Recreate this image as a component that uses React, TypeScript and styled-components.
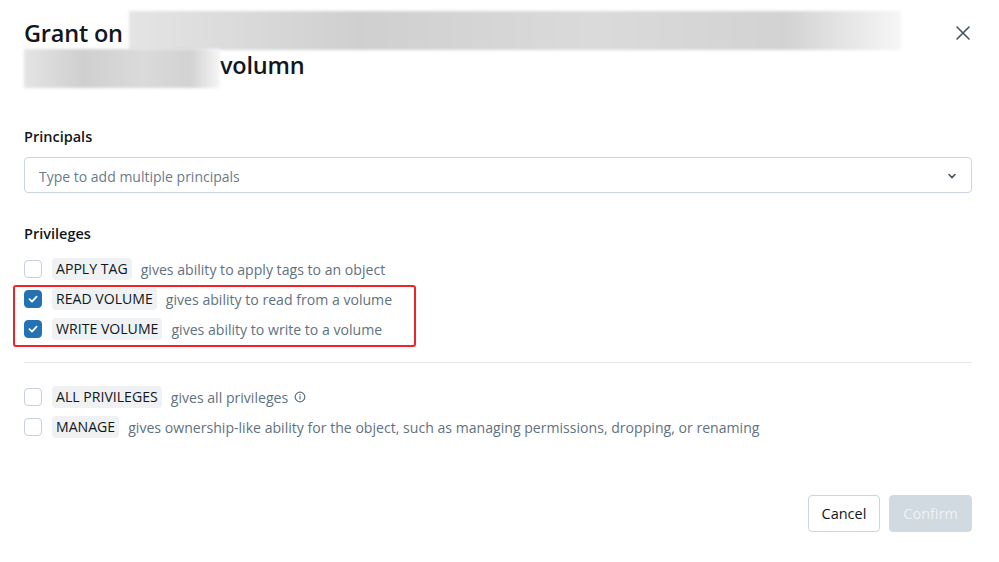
import styled, { createGlobalStyle } from 'styled-components';

const GlobalStyle = createGlobalStyle`
  html, body {
    margin: 0;
    padding: 0;
    background: #ffffff;
  }
  body {
    font-family: 'Open Sans', 'Noto Sans', sans-serif;
    color: #11171c;
  }
`;

const Modal = styled.div`
  width: 999px;
  height: 562px;
  box-sizing: border-box;
  padding: 17px 27px 0 24px;
  display: flex;
  flex-direction: column;
  background: #ffffff;
`;

const Header = styled.div`
  display: flex;
  justify-content: space-between;
  align-items: flex-start;
`;

const Title = styled.h2`
  margin: 0;
  font-size: 23.5px;
  font-weight: 600;
  line-height: 32px;
  letter-spacing: -0.2px;
  color: #11171c;
`;

const Redacted = styled.span<{ $w: number; $shift: number }>`
  display: inline-block;
  vertical-align: middle;
  position: relative;
  top: ${p => p.$shift}px;
  width: ${p => p.$w}px;
  height: 39px;
  margin: -6px 0;
  background: linear-gradient(90deg, #e4e4e4, #cfcfcf 30%, #dadada 60%, #d2d2d2 85%, #f6f6f6);
  filter: blur(1.5px);
`;

const CloseButton = styled.button`
  border: none;
  background: none;
  padding: 0;
  margin-top: 7px;
  width: 18px;
  height: 18px;
  color: #445461;
  cursor: pointer;
`;

const Section = styled.div<{ $top: number }>`
  margin-top: ${p => p.$top}px;
`;

const Label = styled.div<{ $gap: number }>`
  font-size: 14.5px;
  font-weight: 600;
  line-height: 22px;
  margin-bottom: ${p => p.$gap}px;
`;

const SelectBox = styled.div`
  height: 36px;
  box-sizing: border-box;
  border: 1px solid #cbd5df;
  border-radius: 4px;
  display: flex;
  align-items: center;
  justify-content: space-between;
  padding: 2px 14px 0 14px;
  font-size: 14px;
  color: #6b7b8a;
`;

const Rows = styled.div`
  display: flex;
  flex-direction: column;
  gap: 8px;
`;

const Highlight = styled.div`
  position: relative;
  display: flex;
  flex-direction: column;
  gap: 8px;
  &::after {
    content: '';
    position: absolute;
    left: -11px;
    top: -3px;
    width: 399px;
    bottom: -7px;
    border: 2px solid #f2222a;
    border-radius: 3px;
    pointer-events: none;
  }
`;

const Row = styled.label`
  display: flex;
  align-items: center;
  height: 22px;
  font-size: 14.1px;
  white-space: nowrap;
`;

const Box = styled.span<{ $checked?: boolean }>`
  width: 18px;
  height: 18px;
  box-sizing: border-box;
  border-radius: 4px;
  border: 1px solid ${p => (p.$checked ? '#2272b4' : '#c6d1db')};
  background: ${p => (p.$checked ? '#2272b4' : '#ffffff')};
  display: flex;
  align-items: center;
  justify-content: center;
  margin-right: 10px;
  flex-shrink: 0;
`;

const Tag = styled.span`
  background: #eff1f3;
  border-radius: 4px;
  padding: 0 4px;
  line-height: 22px;
  color: #11171c;
  margin-right: 9px;
`;

const Desc = styled.span`
  color: #5f7281;
  display: flex;
  align-items: center;
  gap: 6px;
`;

const Divider = styled.hr`
  border: none;
  border-top: 1px solid #e4e8ec;
  margin: 22px 0 23px;
`;

const Footer = styled.div`
  margin-top: auto;
  margin-bottom: 30px;
  display: flex;
  justify-content: flex-end;
  gap: 9px;
`;

const Button = styled.button<{ $primary?: boolean }>`
  height: 37px;
  box-sizing: border-box;
  padding: 0 13px;
  border-radius: 4px;
  font-family: inherit;
  font-size: 14.5px;
  border: 1px solid ${p => (p.$primary ? '#d1d9e1' : '#cbd5df')};
  background: ${p => (p.$primary ? '#d1d9e1' : '#ffffff')};
  color: ${p => (p.$primary ? '#eef2f5' : '#11171c')};
`;

const Check = () => (
  <svg width='12' height='12' viewBox='0 0 12 12'>
    <path d='M2.5 6.2 L5 8.6 L9.6 3.6' fill='none' stroke='#fff' strokeWidth='1.8' strokeLinecap='round' strokeLinejoin='round' />
  </svg>
);

type Priv = { name: string; desc: string; checked?: boolean; info?: boolean };

const PrivRow = ({ p }: { p: Priv }) => (
  <Row>
    <Box $checked={p.checked}>{p.checked && <Check />}</Box>
    <Tag>{p.name}</Tag>
    <Desc>
      {p.desc}
      {p.info && (
        <svg width='12' height='12' viewBox='0 0 12 12'>
          <circle cx='6' cy='6' r='4.8' fill='none' stroke='#5f7281' strokeWidth='1.2' />
          <rect x='5.4' y='5.2' width='1.2' height='3.2' fill='#5f7281' />
          <rect x='5.4' y='3.3' width='1.2' height='1.2' fill='#5f7281' />
        </svg>
      )}
    </Desc>
  </Row>
);

export default function App() {
  return (
    <>
      <GlobalStyle />
      <Modal>
        <Header>
          <Title>
            Grant on <Redacted $w={772} $shift={-5} />
            <br />
            <Redacted $w={196} $shift={1} />
            volumn
          </Title>
          <CloseButton aria-label='Close'>
            <svg width='18' height='18' viewBox='0 0 18 18'>
              <path d='M3 3 L15 15 M15 3 L3 15' stroke='currentColor' strokeWidth='1.6' strokeLinecap='round' />
            </svg>
          </CloseButton>
        </Header>

        <Section $top={45}>
          <Label $gap={9}>Principals</Label>
          <SelectBox>
            <span>Type to add multiple principals</span>
            <svg width='10' height='10' viewBox='0 0 10 10'>
              <path d='M2 3.5 L5 6.5 L8 3.5' fill='none' stroke='#445461' strokeWidth='1.6' strokeLinecap='round' />
            </svg>
          </SelectBox>
        </Section>

        <Section $top={30}>
          <Label $gap={13}>Privileges</Label>
          <Rows>
            <PrivRow p={{ name: 'APPLY TAG', desc: 'gives ability to apply tags to an object' }} />
            <Highlight>
              <PrivRow p={{ name: 'READ VOLUME', desc: 'gives ability to read from a volume', checked: true }} />
              <PrivRow p={{ name: 'WRITE VOLUME', desc: 'gives ability to write to a volume', checked: true }} />
            </Highlight>
          </Rows>
          <Divider />
          <Rows>
            <PrivRow p={{ name: 'ALL PRIVILEGES', desc: 'gives all privileges', info: true }} />
            <PrivRow
              p={{
                name: 'MANAGE',
                desc: 'gives ownership-like ability for the object, such as managing permissions, dropping, or renaming',
              }}
            />
          </Rows>
        </Section>

        <Footer>
          <Button>Cancel</Button>
          <Button $primary>Confirm</Button>
        </Footer>
      </Modal>
    </>
  );
}
